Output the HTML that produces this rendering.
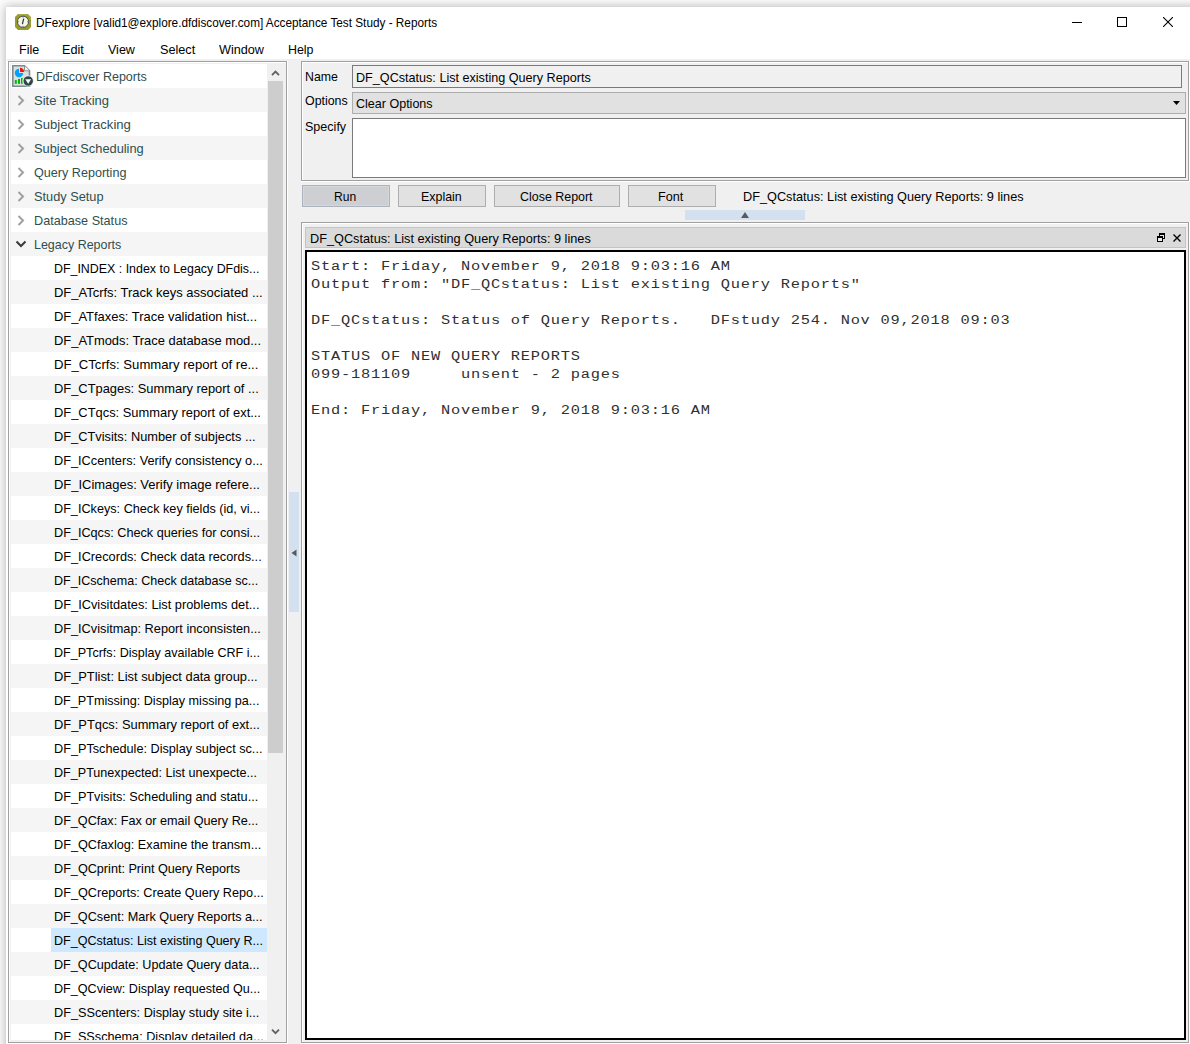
<!DOCTYPE html><html><head><meta charset="utf-8"><title>DFexplore Reports</title><style>
html,body{margin:0;padding:0;}
body{width:1190px;height:1044px;position:relative;overflow:hidden;background:#f0f0f0;font-family:'Liberation Sans',sans-serif;}
div{position:absolute;box-sizing:border-box;}
.t{white-space:pre;line-height:20px;}
svg{position:absolute;}
</style></head><body>
<div style="left:0px;top:0px;width:1190px;height:1044px;background:#fcfcfc"></div>
<div style="left:6px;top:7px;width:1200px;height:1100px;background:#fff;box-shadow:0 0 9px 1px rgba(0,0,0,0.26)"></div>
<div style="left:7px;top:59px;width:1183px;height:985px;background:#f0f0f0"></div>
<svg style="left:15px;top:14px" width="16" height="16" viewBox="0 0 16 16">
<path d="M3 0H13L16 3V13L13 16H3L0 13V3Z" fill="#9a9a2a"/>
<path d="M3.5 0.8H12.5L15.2 3.5V6" fill="none" stroke="#c4c46a" stroke-width="0.8" opacity="0.7"/>
<circle cx="8" cy="7.8" r="5.6" fill="#f6f6e4" stroke="#3c4a64" stroke-width="0.9"/>
<path d="M8 2.4V3.8M8 11.8V13.2M2.6 7.8H4M12 7.8H13.4" stroke="#5a6a9a" stroke-width="0.8"/>
<path d="M8.7 4.6L7.4 10.2" stroke="#2a3040" stroke-width="1.2"/>
</svg>
<div id="t1" class="t" style="left:36.12px;top:13px;font-size:12.2px;color:#000;transform:scaleX(0.9659);transform-origin:0 0;">DFexplore [valid1@explore.dfdiscover.com] Acceptance Test Study - Reports</div>
<div style="left:1072px;top:22px;width:10px;height:1px;background:#000"></div>
<div style="left:1117px;top:17px;width:10px;height:10px;border:1px solid #000"></div>
<svg style="left:1163px;top:17px" width="10" height="10" viewBox="0 0 10 10"><path d="M0 0L10 10M10 0L0 10" stroke="#000" stroke-width="1.1"/></svg>
<div id="t2" class="t" style="left:19.14px;top:40px;font-size:12.7px;color:#000;transform:scaleX(0.9906);transform-origin:0 0;">File</div>
<div id="t3" class="t" style="left:61.89px;top:40px;font-size:12.7px;color:#000;transform:scaleX(0.9994);transform-origin:0 0;">Edit</div>
<div id="t4" class="t" style="left:107.59px;top:40px;font-size:12.7px;color:#000;transform:scaleX(0.9868);transform-origin:0 0;">View</div>
<div id="t5" class="t" style="left:160.35px;top:40px;font-size:12.7px;color:#000;transform:scaleX(0.9987);transform-origin:0 0;">Select</div>
<div id="t6" class="t" style="left:218.60px;top:40px;font-size:12.7px;color:#000;transform:scaleX(0.9970);transform-origin:0 0;">Window</div>
<div id="t7" class="t" style="left:287.84px;top:40px;font-size:12.7px;color:#000;transform:scaleX(0.9779);transform-origin:0 0;">Help</div>
<div style="left:7px;top:61px;width:1px;height:983px;background:#fff"></div>
<div style="left:8px;top:61px;width:280px;height:983px;border-right:1px solid #fff;border-bottom:1px solid #fff"></div>
<div style="left:8px;top:61px;width:279px;height:982px;border:1px solid #a0a0a0;background:#f0f0f0"></div>
<div style="left:9px;top:62px;width:277px;height:980px;border-left:1px solid #fff;border-top:1px solid #fff"></div>
<div style="left:11px;top:64px;width:256px;height:24px;background:#fff"></div>
<div style="left:11px;top:88px;width:256px;height:24px;background:#f5f5f5"></div>
<div style="left:11px;top:112px;width:256px;height:24px;background:#fff"></div>
<div style="left:11px;top:136px;width:256px;height:24px;background:#f5f5f5"></div>
<div style="left:11px;top:160px;width:256px;height:24px;background:#fff"></div>
<div style="left:11px;top:184px;width:256px;height:24px;background:#f5f5f5"></div>
<div style="left:11px;top:208px;width:256px;height:24px;background:#fff"></div>
<div style="left:11px;top:232px;width:256px;height:24px;background:#f5f5f5"></div>
<div style="left:11px;top:256px;width:256px;height:24px;background:#fff"></div>
<div style="left:11px;top:280px;width:256px;height:24px;background:#f5f5f5"></div>
<div style="left:11px;top:304px;width:256px;height:24px;background:#fff"></div>
<div style="left:11px;top:328px;width:256px;height:24px;background:#f5f5f5"></div>
<div style="left:11px;top:352px;width:256px;height:24px;background:#fff"></div>
<div style="left:11px;top:376px;width:256px;height:24px;background:#f5f5f5"></div>
<div style="left:11px;top:400px;width:256px;height:24px;background:#fff"></div>
<div style="left:11px;top:424px;width:256px;height:24px;background:#f5f5f5"></div>
<div style="left:11px;top:448px;width:256px;height:24px;background:#fff"></div>
<div style="left:11px;top:472px;width:256px;height:24px;background:#f5f5f5"></div>
<div style="left:11px;top:496px;width:256px;height:24px;background:#fff"></div>
<div style="left:11px;top:520px;width:256px;height:24px;background:#f5f5f5"></div>
<div style="left:11px;top:544px;width:256px;height:24px;background:#fff"></div>
<div style="left:11px;top:568px;width:256px;height:24px;background:#f5f5f5"></div>
<div style="left:11px;top:592px;width:256px;height:24px;background:#fff"></div>
<div style="left:11px;top:616px;width:256px;height:24px;background:#f5f5f5"></div>
<div style="left:11px;top:640px;width:256px;height:24px;background:#fff"></div>
<div style="left:11px;top:664px;width:256px;height:24px;background:#f5f5f5"></div>
<div style="left:11px;top:688px;width:256px;height:24px;background:#fff"></div>
<div style="left:11px;top:712px;width:256px;height:24px;background:#f5f5f5"></div>
<div style="left:11px;top:736px;width:256px;height:24px;background:#fff"></div>
<div style="left:11px;top:760px;width:256px;height:24px;background:#f5f5f5"></div>
<div style="left:11px;top:784px;width:256px;height:24px;background:#fff"></div>
<div style="left:11px;top:808px;width:256px;height:24px;background:#f5f5f5"></div>
<div style="left:11px;top:832px;width:256px;height:24px;background:#fff"></div>
<div style="left:11px;top:856px;width:256px;height:24px;background:#f5f5f5"></div>
<div style="left:11px;top:880px;width:256px;height:24px;background:#fff"></div>
<div style="left:11px;top:904px;width:256px;height:24px;background:#f5f5f5"></div>
<div style="left:11px;top:928px;width:256px;height:24px;background:#fff"></div>
<div style="left:11px;top:952px;width:256px;height:24px;background:#f5f5f5"></div>
<div style="left:11px;top:976px;width:256px;height:24px;background:#fff"></div>
<div style="left:11px;top:1000px;width:256px;height:24px;background:#f5f5f5"></div>
<div style="left:11px;top:1024px;width:256px;height:16px;background:#fff"></div>
<div style="left:11px;top:64px;width:256px;height:976px;overflow:hidden">
<svg style="left:1px;top:1px" width="24" height="24" viewBox="0 0 24 24">
<path d="M0.8 0.8H12.5L17.5 5.8V21.2H0.8Z" fill="#dedede" stroke="#7a8c8c" stroke-width="1.6"/>
<path d="M12.5 0.8V5.8H17.5" fill="#f4f4f4" stroke="#7a8c8c" stroke-width="0.9"/>
<path d="M7 3.8A4.2 4.2 0 1 0 11.2 8H7Z" fill="#00a2ff"/>
<path d="M8 2.8A4.2 4.2 0 0 1 12.2 7H8Z" fill="#ff1010"/>
<rect x="2.8" y="15" width="2" height="3.8" fill="#00b400"/><rect x="6" y="14" width="2" height="4.8" fill="#00b400"/><rect x="9" y="13" width="1.6" height="5.8" fill="#00b400"/>
<circle cx="16.2" cy="16" r="5.2" fill="#2e4848" stroke="#fff" stroke-width="0.8"/>
<path d="M13.3 14.3H19.1L16.2 18.7Z" fill="#fff"/>
</svg>
<div id="t8" class="t" style="left:24.63px;top:3px;font-size:12.7px;color:#2f4f4f;transform:scaleX(0.9881);transform-origin:0 0;">DFdiscover Reports</div>
<svg style="left:6px;top:31px" width="10" height="11" viewBox="0 0 10 11"><path d="M1.5 1L6 5.5L1.5 10" fill="none" stroke="#a0a0a0" stroke-width="2"/></svg>
<div id="t9" class="t" style="left:23.22px;top:27px;font-size:12.7px;color:#2f4f4f;transform:scaleX(1.0223);transform-origin:0 0;">Site Tracking</div>
<svg style="left:6px;top:55px" width="10" height="11" viewBox="0 0 10 11"><path d="M1.5 1L6 5.5L1.5 10" fill="none" stroke="#a0a0a0" stroke-width="2"/></svg>
<div id="t10" class="t" style="left:23.18px;top:51px;font-size:12.7px;color:#2f4f4f;transform:scaleX(1.0332);transform-origin:0 0;">Subject Tracking</div>
<svg style="left:6px;top:79px" width="10" height="11" viewBox="0 0 10 11"><path d="M1.5 1L6 5.5L1.5 10" fill="none" stroke="#a0a0a0" stroke-width="2"/></svg>
<div id="t11" class="t" style="left:23.23px;top:75px;font-size:12.7px;color:#2f4f4f;transform:scaleX(1.0100);transform-origin:0 0;">Subject Scheduling</div>
<svg style="left:6px;top:103px" width="10" height="11" viewBox="0 0 10 11"><path d="M1.5 1L6 5.5L1.5 10" fill="none" stroke="#a0a0a0" stroke-width="2"/></svg>
<div id="t12" class="t" style="left:22.90px;top:99px;font-size:12.7px;color:#2f4f4f;transform:scaleX(0.9930);transform-origin:0 0;">Query Reporting</div>
<svg style="left:6px;top:127px" width="10" height="11" viewBox="0 0 10 11"><path d="M1.5 1L6 5.5L1.5 10" fill="none" stroke="#a0a0a0" stroke-width="2"/></svg>
<div id="t13" class="t" style="left:23.23px;top:123px;font-size:12.7px;color:#2f4f4f;transform:scaleX(1.0058);transform-origin:0 0;">Study Setup</div>
<svg style="left:6px;top:151px" width="10" height="11" viewBox="0 0 10 11"><path d="M1.5 1L6 5.5L1.5 10" fill="none" stroke="#a0a0a0" stroke-width="2"/></svg>
<div id="t14" class="t" style="left:23.08px;top:147px;font-size:12.7px;color:#2f4f4f;transform:scaleX(0.9966);transform-origin:0 0;">Database Status</div>
<svg style="left:4px;top:175px" width="12" height="10" viewBox="0 0 12 10"><path d="M1.5 2.5L6 7L10.5 2.5" fill="none" stroke="#3a3a3a" stroke-width="2"/></svg>
<div id="t15" class="t" style="left:23.10px;top:171px;font-size:12.7px;color:#2f4f4f;transform:scaleX(0.9821);transform-origin:0 0;">Legacy Reports</div>
<div id="t16" class="t" style="left:43.17px;top:195px;font-size:12.7px;color:#000;transform:scaleX(0.9773);transform-origin:0 0;">DF_INDEX : Index to Legacy DFdis...</div>
<div id="t17" class="t" style="left:43.12px;top:219px;font-size:12.7px;color:#000;transform:scaleX(1.0220);transform-origin:0 0;">DF_ATcrfs: Track keys associated ...</div>
<div id="t18" class="t" style="left:43.13px;top:243px;font-size:12.7px;color:#000;transform:scaleX(1.0186);transform-origin:0 0;">DF_ATfaxes: Trace validation hist...</div>
<div id="t19" class="t" style="left:43.13px;top:267px;font-size:12.7px;color:#000;transform:scaleX(1.0171);transform-origin:0 0;">DF_ATmods: Trace database mod...</div>
<div id="t20" class="t" style="left:43.11px;top:291px;font-size:12.7px;color:#000;transform:scaleX(1.0355);transform-origin:0 0;">DF_CTcrfs: Summary report of re...</div>
<div id="t21" class="t" style="left:43.13px;top:315px;font-size:12.7px;color:#000;transform:scaleX(1.0152);transform-origin:0 0;">DF_CTpages: Summary report of ...</div>
<div id="t22" class="t" style="left:43.13px;top:339px;font-size:12.7px;color:#000;transform:scaleX(1.0157);transform-origin:0 0;">DF_CTqcs: Summary report of ext...</div>
<div id="t23" class="t" style="left:43.14px;top:363px;font-size:12.7px;color:#000;transform:scaleX(1.0102);transform-origin:0 0;">DF_CTvisits: Number of subjects ...</div>
<div id="t24" class="t" style="left:43.15px;top:387px;font-size:12.7px;color:#000;transform:scaleX(1.0039);transform-origin:0 0;">DF_ICcenters: Verify consistency o...</div>
<div id="t25" class="t" style="left:43.13px;top:411px;font-size:12.7px;color:#000;transform:scaleX(1.0207);transform-origin:0 0;">DF_ICimages: Verify image refere...</div>
<div id="t26" class="t" style="left:43.16px;top:435px;font-size:12.7px;color:#000;transform:scaleX(0.9976);transform-origin:0 0;">DF_ICkeys: Check key fields (id, vi...</div>
<div id="t27" class="t" style="left:43.15px;top:459px;font-size:12.7px;color:#000;transform:scaleX(0.9976);transform-origin:0 0;">DF_ICqcs: Check queries for consi...</div>
<div id="t28" class="t" style="left:43.15px;top:483px;font-size:12.7px;color:#000;transform:scaleX(1.0052);transform-origin:0 0;">DF_ICrecords: Check data records...</div>
<div id="t29" class="t" style="left:43.16px;top:507px;font-size:12.7px;color:#000;transform:scaleX(0.9887);transform-origin:0 0;">DF_ICschema: Check database sc...</div>
<div id="t30" class="t" style="left:43.14px;top:531px;font-size:12.7px;color:#000;transform:scaleX(1.0082);transform-origin:0 0;">DF_ICvisitdates: List problems det...</div>
<div id="t31" class="t" style="left:43.15px;top:555px;font-size:12.7px;color:#000;transform:scaleX(1.0042);transform-origin:0 0;">DF_ICvisitmap: Report inconsisten...</div>
<div id="t32" class="t" style="left:43.16px;top:579px;font-size:12.7px;color:#000;transform:scaleX(0.9905);transform-origin:0 0;">DF_PTcrfs: Display available CRF i...</div>
<div id="t33" class="t" style="left:43.13px;top:603px;font-size:12.7px;color:#000;transform:scaleX(1.0135);transform-origin:0 0;">DF_PTlist: List subject data group...</div>
<div id="t34" class="t" style="left:43.16px;top:627px;font-size:12.7px;color:#000;transform:scaleX(0.9942);transform-origin:0 0;">DF_PTmissing: Display missing pa...</div>
<div id="t35" class="t" style="left:43.13px;top:651px;font-size:12.7px;color:#000;transform:scaleX(1.0140);transform-origin:0 0;">DF_PTqcs: Summary report of ext...</div>
<div id="t36" class="t" style="left:43.15px;top:675px;font-size:12.7px;color:#000;transform:scaleX(0.9986);transform-origin:0 0;">DF_PTschedule: Display subject sc...</div>
<div id="t37" class="t" style="left:43.16px;top:699px;font-size:12.7px;color:#000;transform:scaleX(0.9915);transform-origin:0 0;">DF_PTunexpected: List unexpecte...</div>
<div id="t38" class="t" style="left:43.15px;top:723px;font-size:12.7px;color:#000;transform:scaleX(0.9986);transform-origin:0 0;">DF_PTvisits: Scheduling and statu...</div>
<div id="t39" class="t" style="left:43.15px;top:747px;font-size:12.7px;color:#000;transform:scaleX(0.9960);transform-origin:0 0;">DF_QCfax: Fax or email Query Re...</div>
<div id="t40" class="t" style="left:43.15px;top:771px;font-size:12.7px;color:#000;transform:scaleX(0.9996);transform-origin:0 0;">DF_QCfaxlog: Examine the transm...</div>
<div id="t41" class="t" style="left:43.15px;top:795px;font-size:12.7px;color:#000;transform:scaleX(0.9961);transform-origin:0 0;">DF_QCprint: Print Query Reports</div>
<div id="t42" class="t" style="left:43.15px;top:819px;font-size:12.7px;color:#000;transform:scaleX(0.9979);transform-origin:0 0;">DF_QCreports: Create Query Repo...</div>
<div id="t43" class="t" style="left:43.15px;top:843px;font-size:12.7px;color:#000;transform:scaleX(0.9958);transform-origin:0 0;">DF_QCsent: Mark Query Reports a...</div>
<div style="left:40px;top:864px;width:216px;height:24px;background:#cde8ff"></div>
<div id="t44" class="t" style="left:43.18px;top:867px;font-size:12.7px;color:#000;transform:scaleX(0.9882);transform-origin:0 0;">DF_QCstatus: List existing Query R...</div>
<div id="t45" class="t" style="left:43.16px;top:891px;font-size:12.7px;color:#000;transform:scaleX(0.9941);transform-origin:0 0;">DF_QCupdate: Update Query data...</div>
<div id="t46" class="t" style="left:43.16px;top:915px;font-size:12.7px;color:#000;transform:scaleX(0.9920);transform-origin:0 0;">DF_QCview: Display requested Qu...</div>
<div id="t47" class="t" style="left:43.15px;top:939px;font-size:12.7px;color:#000;transform:scaleX(1.0010);transform-origin:0 0;">DF_SScenters: Display study site i...</div>
<div id="t48" class="t" style="left:43.15px;top:963px;font-size:12.7px;color:#000;transform:scaleX(0.9979);transform-origin:0 0;">DF_SSschema: Display detailed da...</div>
</div>
<svg style="left:271px;top:69px" width="9" height="8" viewBox="0 0 9 8"><path d="M1 6.2L4.5 2.6L8 6.2" fill="none" stroke="#606060" stroke-width="1.8"/></svg>
<div style="left:268px;top:81px;width:15px;height:672px;background:#cdcdcd"></div>
<svg style="left:271px;top:1028px" width="9" height="8" viewBox="0 0 9 8"><path d="M1 1.6L4.5 5.2L8 1.6" fill="none" stroke="#606060" stroke-width="1.8"/></svg>
<div style="left:289px;top:492px;width:10px;height:120px;background:#d2e0f0"></div>
<svg style="left:291px;top:549px" width="6" height="8" viewBox="0 0 6 8"><path d="M5.5 0.5V7.5L0.5 4Z" fill="#5a5a5a"/></svg>
<div style="left:301px;top:61px;width:889px;height:121px;border-right:1px solid #fff;border-bottom:1px solid #fff"></div>
<div style="left:301px;top:61px;width:888px;height:120px;border:1px solid #a0a0a0"></div>
<div style="left:302px;top:62px;width:886px;height:118px;border-left:1px solid #fff;border-top:1px solid #fff"></div>
<div id="t49" class="t" style="left:305.17px;top:67px;font-size:12.7px;color:#000;transform:scaleX(0.9694);transform-origin:0 0;">Name</div>
<div id="t50" class="t" style="left:305.18px;top:91px;font-size:12.7px;color:#000;transform:scaleX(0.9764);transform-origin:0 0;">Options</div>
<div id="t51" class="t" style="left:305.37px;top:117px;font-size:12.7px;color:#000;transform:scaleX(0.9886);transform-origin:0 0;">Specify</div>
<div style="left:352px;top:65px;width:830px;height:23px;border:1px solid #7a7a7a;background:#f0f0f0"></div>
<div id="t52" class="t" style="left:356.16px;top:68px;font-size:12.7px;color:#000;transform:scaleX(0.9938);transform-origin:0 0;">DF_QCstatus: List existing Query Reports</div>
<div style="left:352px;top:92px;width:834px;height:22px;border:1px solid #adadad;background:#e1e1e1"></div>
<div id="t53" class="t" style="left:355.90px;top:94px;font-size:12.7px;color:#000;transform:scaleX(0.9874);transform-origin:0 0;">Clear Options</div>
<svg style="left:1173px;top:101px" width="7" height="4" viewBox="0 0 7 4"><path d="M0 0H7L3.5 4Z" fill="#000"/></svg>
<div style="left:352px;top:118px;width:834px;height:60px;border:1px solid #7a7a7a;background:#fff"></div>
<div style="left:302px;top:185px;width:88px;height:22px;border:1px solid #aab3be;background:#cdcfd2;box-shadow:inset 0 0 0 1px #d5d7d8"></div>
<div id="t54" class="t" style="left:333.97px;top:187px;font-size:12.7px;color:#000;transform:scaleX(0.9524);transform-origin:0 0;">Run</div>
<div style="left:398px;top:185px;width:88px;height:22px;border:1px solid #adadad;background:#e1e1e1"></div>
<div id="t55" class="t" style="left:420.84px;top:187px;font-size:12.7px;color:#000;transform:scaleX(0.9795);transform-origin:0 0;">Explain</div>
<div style="left:494px;top:185px;width:126px;height:22px;border:1px solid #adadad;background:#e1e1e1"></div>
<div id="t56" class="t" style="left:519.90px;top:187px;font-size:12.7px;color:#000;transform:scaleX(0.9801);transform-origin:0 0;">Close Report</div>
<div style="left:628px;top:185px;width:88px;height:22px;border:1px solid #adadad;background:#e1e1e1"></div>
<div id="t57" class="t" style="left:658.08px;top:187px;font-size:12.7px;color:#000;transform:scaleX(0.9942);transform-origin:0 0;">Font</div>
<div id="t58" class="t" style="left:743.25px;top:187px;font-size:12.7px;color:#000;transform:scaleX(1.0024);transform-origin:0 0;">DF_QCstatus: List existing Query Reports: 9 lines</div>
<div style="left:685px;top:210px;width:120px;height:10px;background:#d2e0f0"></div>
<svg style="left:741px;top:212px" width="8" height="6" viewBox="0 0 8 6"><path d="M0 6H8L4 0Z" fill="#5a5a5a"/></svg>
<div style="left:301px;top:222px;width:889px;height:822px;border-right:1px solid #fff;border-bottom:1px solid #fff"></div>
<div style="left:301px;top:222px;width:888px;height:821px;border:1px solid #a0a0a0"></div>
<div style="left:302px;top:223px;width:886px;height:819px;border-left:1px solid #fff;border-top:1px solid #fff"></div>
<div style="left:305px;top:227px;width:881px;height:21px;border:1px solid #c4c4c4;background:#dadada"></div>
<div id="t59" class="t" style="left:310.15px;top:229px;font-size:12.7px;color:#000;transform:scaleX(1.0029);transform-origin:0 0;">DF_QCstatus: List existing Query Reports: 9 lines</div>
<div style="left:1159px;top:233px;width:6px;height:2px;background:#000"></div>
<div style="left:1164px;top:233px;width:1px;height:6px;background:#000"></div>
<div style="left:1159px;top:233px;width:1px;height:3px;background:#000"></div>
<div style="left:1163px;top:238px;width:2px;height:1px;background:#000"></div>
<div style="left:1160px;top:235px;width:4px;height:1px;background:#e8e8e8"></div>
<div style="left:1157px;top:236px;width:6px;height:6px;border:1px solid #000;border-top:2px solid #000;background:#ececec"></div>
<svg style="left:1173px;top:234px" width="8" height="8" viewBox="0 0 8 8"><path d="M0.5 0.5L7.5 7.5M7.5 0.5L0.5 7.5" stroke="#000" stroke-width="1.4"/></svg>
<div style="left:305px;top:250px;width:881px;height:790px;border:2px solid #000;background:#fff"></div>
<div style="left:311px;top:258px;font-family:'Liberation Mono', monospace;font-size:13.7px;letter-spacing:0.7086px;line-height:18px;white-space:pre;color:#303030;transform:scaleX(1.12);transform-origin:0 0">Start: Friday, November 9, 2018 9:03:16 AM
Output from: &quot;DF_QCstatus: List existing Query Reports&quot;

DF_QCstatus: Status of Query Reports.   DFstudy 254. Nov 09,2018 09:03

STATUS OF NEW QUERY REPORTS
099-181109     unsent - 2 pages

End: Friday, November 9, 2018 9:03:16 AM</div>
</body></html>
